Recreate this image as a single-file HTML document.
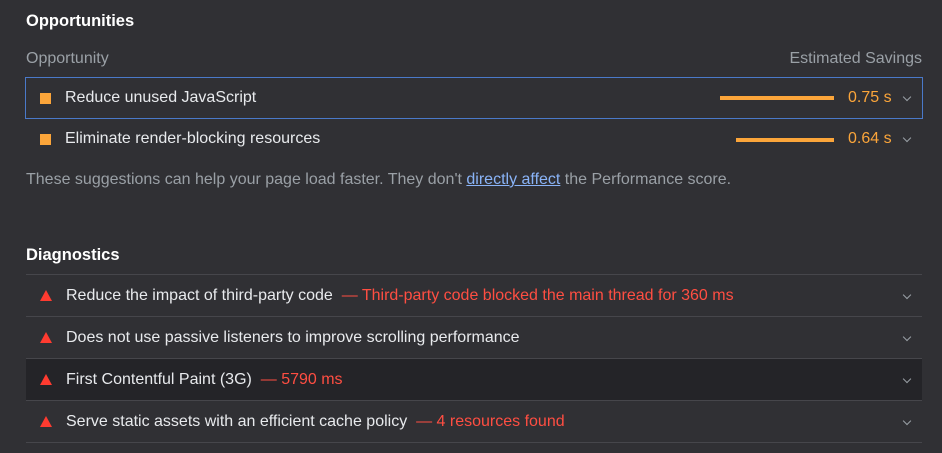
<!DOCTYPE html>
<html><head><style>
body{margin:0;width:942px;height:453px;background:#303034;font-family:"Liberation Sans",sans-serif;color:#e8eaed;position:relative;overflow:hidden}
.a{position:absolute;white-space:nowrap}
h{font-weight:bold;font-size:16.5px;color:#fff}
.g{color:#9aa0a6;font-size:16px}
.t{font-size:16px}
.sq{width:11px;height:11px;background:#fba53a}
.bar{height:4px;background:#fba53a}
.o{color:#fba53a;font-size:16px}
.r{color:#ff4e42}
.ln{left:26px;width:896px;height:1px;background:#46464b}
.tri{width:0;height:0;border-left:6px solid transparent;border-right:6px solid transparent;border-bottom:11px solid #ff3b30}
.ch{width:5px;height:5px;border-right:1.5px solid #9aa0a6;border-bottom:1.5px solid #9aa0a6;transform:rotate(45deg)}
</style></head><body>
<div class="a" style="left:26px;top:12px"><h>Opportunities</h></div>
<div class="a g" style="left:26px;top:50px">Opportunity</div>
<div class="a g" style="right:20px;top:50px">Estimated Savings</div>
<div class="a" style="left:25px;top:77px;width:896px;height:40px;border:1px solid #4a79c9"></div>
<div class="a sq" style="left:40px;top:93px"></div>
<div class="a t" style="left:65px;top:89px">Reduce unused JavaScript</div>
<div class="a bar" style="left:720px;top:96px;width:114px"></div>
<div class="a o" style="left:848px;top:89px">0.75 s</div>
<div class="a ch" style="left:904px;top:94px"></div>
<div class="a sq" style="left:40px;top:134px"></div>
<div class="a t" style="left:65px;top:130px">Eliminate render-blocking resources</div>
<div class="a bar" style="left:736px;top:138px;width:98px"></div>
<div class="a o" style="left:848px;top:130px">0.64 s</div>
<div class="a ch" style="left:904px;top:135px"></div>
<div class="a g" style="left:26px;top:171px">These suggestions can help your page load faster. They don't <span style="color:#8ab4f8;text-decoration:underline">directly affect</span> the Performance score.</div>
<div class="a" style="left:26px;top:246px"><h>Diagnostics</h></div>
<div class="a" style="left:26px;top:358px;width:896px;height:42px;background:#242428"></div>
<div class="a ln" style="top:274px"></div>
<div class="a ln" style="top:316px"></div>
<div class="a ln" style="top:358px"></div>
<div class="a ln" style="top:400px"></div>
<div class="a ln" style="top:442px"></div>
<div class="a tri" style="left:40px;top:290px"></div>
<div class="a t" style="left:66px;top:287px">Reduce the impact of third-party code <span class="r">&nbsp;— Third-party code blocked the main thread for 360 ms</span></div>
<div class="a ch" style="left:904px;top:292px"></div>
<div class="a tri" style="left:40px;top:332px"></div>
<div class="a t" style="left:66px;top:329px">Does not use passive listeners to improve scrolling performance</div>
<div class="a ch" style="left:904px;top:334px"></div>
<div class="a tri" style="left:40px;top:374px"></div>
<div class="a t" style="left:66px;top:371px">First Contentful Paint (3G) <span class="r">&nbsp;— 5790 ms</span></div>
<div class="a ch" style="left:904px;top:376px"></div>
<div class="a tri" style="left:40px;top:416px"></div>
<div class="a t" style="left:66px;top:413px">Serve static assets with an efficient cache policy <span class="r">&nbsp;— 4 resources found</span></div>
<div class="a ch" style="left:904px;top:418px"></div>
</body></html>
